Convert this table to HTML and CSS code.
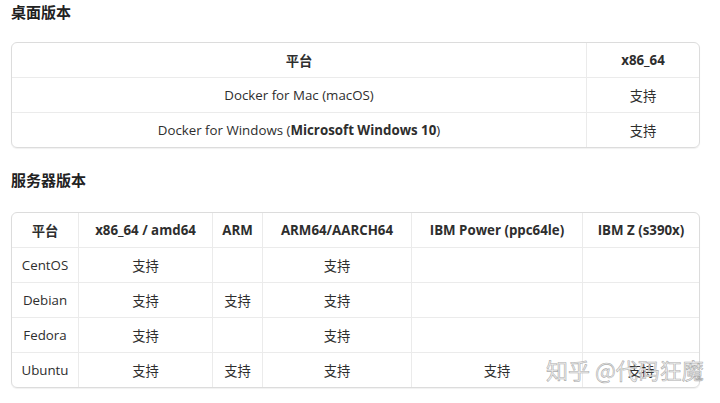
FILE: index.html
```html
<!DOCTYPE html>
<html lang="zh-CN">
<head>
<meta charset="utf-8">
<link rel="stylesheet" href="styles.css">
</head>
<body>
<div class="page">
  <h3 class="title">桌面版本</h3>
  <table class="tbl tbl-desktop">
    <colgroup><col style="width:575px"><col></colgroup>
    <thead>
      <tr><th>平台</th><th>x86_64</th></tr>
    </thead>
    <tbody>
      <tr><td>Docker for Mac (macOS)</td><td>支持</td></tr>
      <tr><td>Docker for Windows (<b>Microsoft Windows 10</b>)</td><td>支持</td></tr>
    </tbody>
  </table>

  <h3 class="title title-2">服务器版本</h3>
  <table class="tbl tbl-server">
    <colgroup>
      <col style="width:67px"><col style="width:134px"><col style="width:50px"><col style="width:149px"><col style="width:171px"><col>
    </colgroup>
    <thead>
      <tr><th>平台</th><th>x86_64 / amd64</th><th>ARM</th><th>ARM64/AARCH64</th><th>IBM Power (ppc64le)</th><th>IBM Z (s390x)</th></tr>
    </thead>
    <tbody>
      <tr><td>CentOS</td><td>支持</td><td></td><td>支持</td><td></td><td></td></tr>
      <tr><td>Debian</td><td>支持</td><td>支持</td><td>支持</td><td></td><td></td></tr>
      <tr><td>Fedora</td><td>支持</td><td></td><td>支持</td><td></td><td></td></tr>
      <tr><td>Ubuntu</td><td>支持</td><td>支持</td><td>支持</td><td>支持</td><td>支持</td></tr>
    </tbody>
  </table>
  <div class="watermark">知乎 @代码狂魔</div>
</div>
</body>
</html>
```

FILE: styles.css
```css
html, body {
  margin: 0;
  padding: 0;
  background: #fff;
}
body {
  font-family: "Open Sans", "Noto Sans CJK SC", sans-serif;
  color: #2e2e2e;
  font-size: 13.3px;
}
.page {
  position: relative;
  width: 720px;
  height: 403px;
  padding: 0 20px 0 11px;
  box-sizing: border-box;
  overflow: hidden;
}
.title {
  margin: 0;
  padding-top: 2px;
  height: 22px;
  line-height: 20px;
  font-size: 15px;
  font-weight: 700;
  color: #222;
  font-family: "Noto Sans CJK SC", sans-serif;
}
.title-2 {
  margin-top: 20px;
}
.tbl {
  width: 689px;
  border-collapse: separate;
  border-spacing: 0;
  border: 1px solid #dcdcdc;
  border-radius: 6px;
  box-shadow: 0 1px 1px rgba(0,0,0,0.06);
  table-layout: fixed;
  overflow: hidden;
}
.tbl-desktop {
  margin-top: 18px;
}
.tbl-server {
  margin-top: 20px;
}
.tbl th, .tbl td {
  height: 34px;
  padding: 0 6px;
  text-align: center;
  vertical-align: middle;
  border-right: 1px solid #ebebeb;
  border-bottom: 1px solid #ebebeb;
  white-space: nowrap;
}
.tbl th {
  font-weight: 700;
  color: #2e2e2e;
}
.tbl b {
  font-weight: 700;
}
.tbl tr > :last-child {
  border-right: none;
}
.tbl tbody tr:last-child td {
  border-bottom: none;
}
.watermark {
  position: absolute;
  left: 546px;
  top: 353px;
  font-family: "Noto Sans CJK SC", sans-serif;
  font-size: 22px;
  line-height: 32px;
  color: rgba(235,235,235,0.85);
  -webkit-text-stroke: 0.6px rgba(140,140,140,0.7);
  white-space: nowrap;
  pointer-events: none;
}
```
